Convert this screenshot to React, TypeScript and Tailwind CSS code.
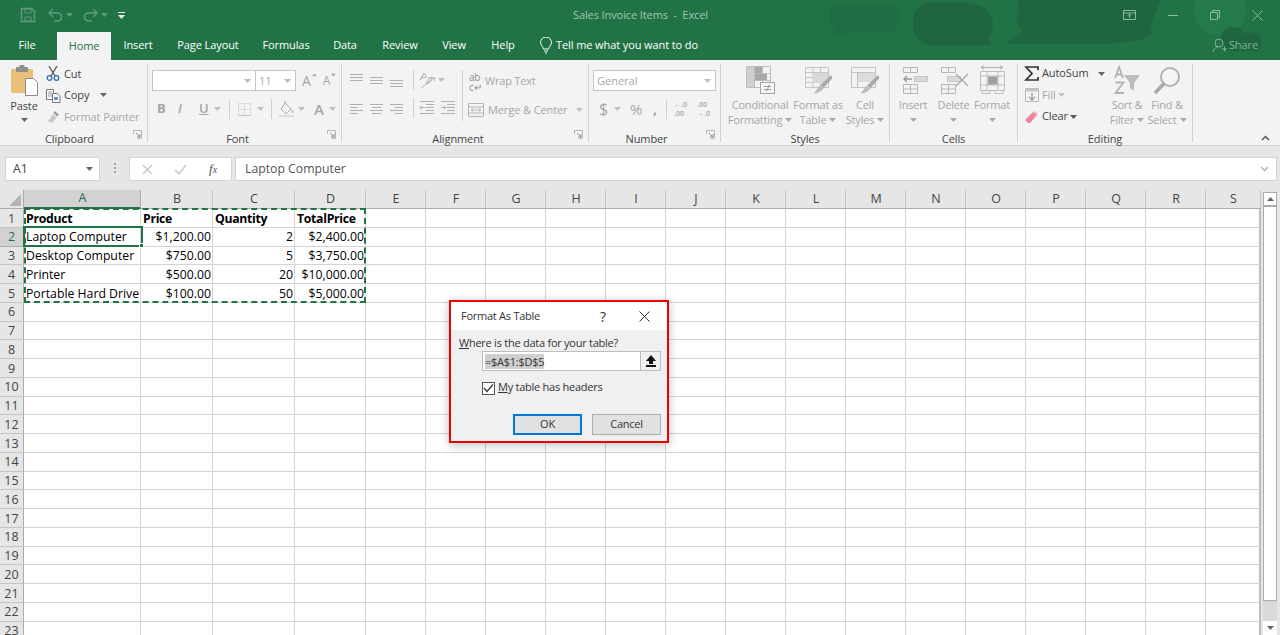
import { ReactNode } from "react";

const FONT = "font-['Open_Sans','Noto_Sans',sans-serif]";

const COLUMNS = ["A", "B", "C", "D", "E", "F", "G", "H", "I", "J", "K", "L", "M", "N", "O", "P", "Q", "R", "S"];
const ROWS = Array.from({ length: 23 }, (_, i) => i + 1);

// cell contents, keyed "<col><row>"
const CELLS: Record<string, { text: string; bold?: boolean; right?: boolean }> = {
  A1: { text: "Product", bold: true },
  B1: { text: "Price", bold: true },
  C1: { text: "Quantity", bold: true },
  D1: { text: "TotalPrice", bold: true },
  A2: { text: "Laptop Computer" },
  B2: { text: "$1,200.00", right: true },
  C2: { text: "2", right: true },
  D2: { text: "$2,400.00", right: true },
  A3: { text: "Desktop Computer" },
  B3: { text: "$750.00", right: true },
  C3: { text: "5", right: true },
  D3: { text: "$3,750.00", right: true },
  A4: { text: "Printer" },
  B4: { text: "$500.00", right: true },
  C4: { text: "20", right: true },
  D4: { text: "$10,000.00", right: true },
  A5: { text: "Portable Hard Drive" },
  B5: { text: "$100.00", right: true },
  C5: { text: "50", right: true },
  D5: { text: "$5,000.00", right: true },
};

function Caret({ color = "#a8a8a8", className = "" }: { color?: string; className?: string }) {
  return (
    <svg width="7" height="4" viewBox="0 0 7 4" className={`shrink-0 ${className}`}>
      <path d="M0 0h7L3.500 4z" fill={color} />
    </svg>
  );
}

function Launcher() {
  return (
    <svg width="9" height="9" viewBox="0 0 9 9" className="absolute right-[5px] bottom-[3px]">
      <path d="M.5 4V.5H8.500V8.500H5" fill="none" stroke="#b5b5b5" />
      <path d="M3 3l4 4M7 4v3H4" fill="none" stroke="#8c8c8c" />
    </svg>
  );
}

function Group({ className, labelClass = "", label, launcher, children }: { className: string; labelClass?: string; label: string; launcher?: boolean; children: ReactNode }) {
  return (
    <div className={`relative flex h-[78px] shrink-0 flex-col border-r border-[#d4d4d4] ${className}`}>
      <div className="h-[67px] shrink-0">{children}</div>
      <div className={`text-center text-[11px] leading-[16px] tracking-[-0.1px] text-[#444] ${labelClass}`}>{label}</div>
      {launcher && <Launcher />}
    </div>
  );
}

function LargeBtn({ className, icon, l1, l2, caret }: { className: string; icon: ReactNode; l1: string; l2?: string; caret?: boolean }) {
  return (
    <div className={`flex shrink-0 flex-col items-center text-[11px] leading-[15px] tracking-[-0.2px] whitespace-nowrap text-[#a6a6a6] ${className}`}>
      <div className="flex h-[33px] items-center justify-center">{icon}</div>
      <div>{l1}</div>
      <div className="flex h-[15px] items-center gap-[3px]">
        {l2}
        {caret && <Caret />}
      </div>
    </div>
  );
}

function Lines({ rows }: { rows: [number, number, number?][] }) {
  return (
    <svg width="14" height="14" viewBox="0 0 14 14">
      {rows.map(([y, len, x = 1], i) => (
        <path key={i} d={`M${x} ${y + 0.5}h${len}`} stroke="#b0b0b0" />
      ))}
    </svg>
  );
}

function PasteIcon() {
  return (
    <svg width="30" height="31" viewBox="0 0 30 31">
      <rect x="2" y="4" width="22" height="24" rx="1" fill="#e8c078" />
      <rect x="7" y="2" width="12" height="5" fill="#8f8f8f" />
      <rect x="10.500" y="0" width="5" height="3" fill="#8f8f8f" />
      <path d="M16.500 13.500h8l4 4v13h-12z" fill="#fff" stroke="#8a8a8a" />
    </svg>
  );
}

function ScissorsIcon() {
  return (
    <svg width="15" height="15" viewBox="0 0 15 15" fill="none">
      <path d="M3 0l6 10M11 0L5 10" stroke="#555" strokeWidth="1.300" />
      <circle cx="3.500" cy="12" r="2.300" stroke="#2f6fb5" strokeWidth="1.300" />
      <circle cx="10.500" cy="12" r="2.300" stroke="#2f6fb5" strokeWidth="1.300" />
    </svg>
  );
}

function CopyIcon() {
  return (
    <svg width="15" height="15" viewBox="0 0 15 15" fill="none">
      <path d="M.5 1.500h7v10h-7z" fill="#fff" stroke="#777" />
      <path d="M2 4h4M2 6h4M2 8h4" stroke="#999" />
      <path d="M6.500 5.500h5l2.500 2.500v6.500h-7.500z" fill="#fff" stroke="#777" />
      <path d="M8 9h4v3H8z" fill="#5b93cc" />
    </svg>
  );
}

function PainterIcon() {
  return (
    <svg width="15" height="14" viewBox="0 0 15 14">
      <path d="M9 1l4 4-2 1.500-3.500-3.500z" fill="#9a9a9a" />
      <path d="M7 4l3.500 3.500L6 13 1 10.500 4 9z" fill="#c8c8c8" />
    </svg>
  );
}

function BigIcon({ children }: { children: ReactNode }) {
  return (
    <svg width="36" height="31" viewBox="0 0 36 31" fill="none">
      {children}
    </svg>
  );
}

function ConditionalIcon() {
  return (
    <BigIcon>
      <path d="M4.500 1.500h24v21h-24zM4.500 8.500h24M4.500 15.500h24M12.500 1.500v21M20.500 1.500v21" stroke="#bdbdbd" />
      <path d="M13 2h7v6h-7zM13 9h12v6H13z" fill="#a9a9a9" />
      <path d="M5 2h7v20H5z" fill="#cfcfcf" />
      <rect x="18.500" y="17.500" width="14" height="11" fill="#f6f6f6" stroke="#a3a3a3" />
      <path d="M22 21.500h7M22 24.500h7M27.500 19.500l-3 7" stroke="#999" />
    </BigIcon>
  );
}

function FormatTableIcon() {
  return (
    <BigIcon>
      <path d="M5.500 2.500h23v20h-23zM5.500 7.500h23M5.500 12.500h23M5.500 17.500h23M13 2.500v20M20.500 2.500v20" stroke="#c6c6c6" />
      <path d="M13 8h15v10H13z" fill="#d8d8d8" />
      <path d="M31 10l1.500 3-9 10-3-3z" fill="#a8a8a8" />
      <path d="M20 20l3.500 3.500c-2 3-6 5-10 5 2-1.500 3.500-5 6.500-8.500z" fill="#bdbdbd" />
    </BigIcon>
  );
}

function CellStylesIcon() {
  return (
    <BigIcon>
      <path d="M4.500 2.500h24v20h-24zM4.500 7.500h24M10.500 7.500v15" stroke="#c2c2c2" />
      <path d="M11 8h17v9H11z" fill="#dcdcdc" />
      <path d="M31 10l1.500 3-9 10-3-3z" fill="#a8a8a8" />
      <path d="M20 20l3.500 3.500c-2 3-6 5-10 5 2-1.500 3.500-5 6.500-8.500z" fill="#bdbdbd" />
    </BigIcon>
  );
}

function InsertIcon() {
  return (
    <BigIcon>
      <path d="M8.500 2.500h14v5h-14zM15.500 2.500v5M8.500 19.500h14v9h-14zM8.500 24h14M15.500 19.500v9M19.500 11.500h13v5h-13zM26 11.500v5" stroke="#b6b6b6" />
      <path d="M19.500 11.500h13v5h-13z" fill="#d9d9d9" />
      <path d="M9 14h8M12 11l-3 3 3 3" stroke="#9a9a9a" strokeWidth="1.400" />
    </BigIcon>
  );
}

function DeleteIcon() {
  return (
    <BigIcon>
      <path d="M5.500 2.500h14v5h-14zM12.500 2.500v5M5.500 19.500h14v9h-14zM5.500 24h14M12.500 19.500v9M11.500 11.500h13v5h-13z" stroke="#b6b6b6" />
      <path d="M11.500 11.500h13v5h-13z" fill="#d9d9d9" />
      <path d="M20 9l12 12M32 9L20 21" stroke="#a8a8a8" strokeWidth="1.400" />
    </BigIcon>
  );
}

function FormatCellsIcon() {
  return (
    <BigIcon>
      <path d="M7 2.500h22M10 .5L7 2.500l3 2M26 .5l3 2-3 2" stroke="#b0b0b0" />
      <path d="M6.500 6.500h24v19h-24zM6.500 11h24M6.500 20h24M13 6.500v19M24 6.500v19" stroke="#bdbdbd" />
      <path d="M14 11.500h9.500v8H14z" fill="#9f9f9f" />
      <path d="M8 25.500v3h8v-3M21 25.500v3h8v-3" stroke="#bdbdbd" />
    </BigIcon>
  );
}

function SortIcon() {
  return (
    <BigIcon>
      <path d="M6 13L10 2l4 11M7.500 9.500h5M6.500 17.500h8L6.500 28h8.500" stroke="#b2b2b2" strokeWidth="1.800" />
      <path d="M15 10h16l-6 8v8l-4-3v-5z" fill="#bcbcbc" />
    </BigIcon>
  );
}

function FindIcon() {
  return (
    <BigIcon>
      <circle cx="21" cy="12" r="9" fill="#f8f3f8" stroke="#b2b2b2" strokeWidth="2" />
      <path d="M14.500 19l-7.500 8" stroke="#a8a8a8" strokeWidth="3.500" strokeLinecap="round" />
    </BigIcon>
  );
}

function Dropdown({ className, text }: { className: string; text?: string }) {
  return (
    <div className={`flex h-[21px] shrink-0 items-center justify-between border border-[#c6c6c6] bg-white pt-[1px] pr-[4px] pl-[3px] text-[11px] text-[#a6a6a6] ${className}`}>
      <span>{text}</span>
      <Caret color="#bcbcbc" />
    </div>
  );
}

function Ribbon() {
  return (
    <div className="relative flex h-[86px] shrink-0 items-start border-b border-[#d2d2d2] bg-[#f3f3f3] pt-[4px]">
      {/* Clipboard */}
      <Group className="w-[148px]" labelClass="pr-[8px]" label="Clipboard" launcher>
        <div className="flex pl-[6px]">
          <div className="flex w-[36px] flex-col items-center pt-[1px] text-[11px] leading-[15px] tracking-[-0.1px] text-[#444]">
            <PasteIcon />
            <span className="mt-[2px]">Paste</span>
            <Caret color="#666" className="mt-[5px]" />
          </div>
          <div className="-mt-[1px] ml-[4px] flex flex-col text-[11px] leading-[22px] tracking-[-0.1px]">
            <div className="flex h-[21px] items-center gap-[3px] text-[#444]">
              <ScissorsIcon />
              Cut
            </div>
            <div className="flex h-[22px] items-center gap-[3px] text-[#444]">
              <CopyIcon />
              Copy
              <Caret color="#666" className="ml-[8px]" />
            </div>
            <div className="flex h-[21px] items-center gap-[3px] text-[#a6a6a6]">
              <PainterIcon />
              Format Painter
            </div>
          </div>
        </div>
      </Group>

      {/* Font */}
      <Group className="w-[194px]" labelClass="pr-[14px]" label="Font" launcher>
        <div className="flex items-center pt-[6px] pl-[4px]">
          <Dropdown className="w-[104px]" />
          <Dropdown className="-ml-px w-[41px]" text="11" />
          <span className="ml-[6px] flex items-start text-[14px] leading-[20px] text-[#a6a6a6]">
            A
            <Caret color="#a6a6a6" className="mt-[2px] scale-75 rotate-180" />
          </span>
          <span className="ml-[5px] flex items-start text-[12px] leading-[20px] text-[#a6a6a6]">
            A
            <Caret color="#a6a6a6" className="mt-[2px] scale-75" />
          </span>
        </div>
        <div className="mt-[8px] flex h-[20px] items-center text-[13px] text-[#a6a6a6]">
          <span className="ml-[9px] w-[21px] font-bold">B</span>
          <span className="w-[21px] font-semibold italic">I</span>
          <span className="w-[15px] font-semibold underline">U</span>
          <Caret color="#c0c0c0" />
          <div className="mr-[8px] ml-[8px] h-[20px] w-px bg-[#d0d0d0]" />
          <svg width="13" height="13" viewBox="0 0 13 13" fill="none">
            <path d="M.5.500h12v12H.5zM6.500.5v12M.5 6.500h12" stroke="#c4c4c4" strokeDasharray="1 1" />
            <path d="M.5 12.500h12" stroke="#c4c4c4" />
          </svg>
          <Caret color="#c0c0c0" className="ml-[6px]" />
          <div className="mx-[7px] h-[20px] w-px bg-[#d0d0d0]" />
          <svg width="16" height="16" viewBox="0 0 16 16">
            <path d="M6 2l6 6-5 5-5-5zM6 2V0" fill="none" stroke="#a8a8a8" />
            <path d="M13 8c1 1.500 2 2.500 1.500 3.500-.5.700-2 .5-2-.5 0-.8.300-2 .5-3z" fill="#bdbdbd" />
            <rect x="0" y="14" width="15" height="2" fill="#dcdcdc" />
          </svg>
          <Caret color="#c0c0c0" className="ml-[3px]" />
          <span className="ml-[9px] text-[15px] leading-[20px] font-semibold">A</span>
          <Caret color="#c0c0c0" className="ml-[5px]" />
        </div>
      </Group>

      {/* Alignment */}
      <Group className="w-[247px]" labelClass="pr-[14px]" label="Alignment" launcher>
        <div className="flex">
          <div className="flex w-[120px] flex-col pl-[7px]">
            <div className="flex items-center pt-[6px]">
              <div className="flex w-[62px] gap-[6px]">
                <Lines rows={[[1, 13], [4, 13], [7, 13]]} />
                <Lines rows={[[4, 13], [7, 13], [10, 13]]} />
                <Lines rows={[[7, 13], [10, 13], [13, 13]]} />
              </div>
              <div className="mr-[4px] ml-[2px] h-[20px] w-px bg-[#d0d0d0]" />
              <svg width="18" height="18" viewBox="0 0 18 18" fill="none">
                <path d="M2 9l4-7 3 4.500M3.500 6.500h4M8 13l4-7c2 1 2 3 .5 4.500C11.500 12 9.500 12 8 13z" stroke="#a8a8a8" />
                <path d="M3 17L16 7M13 6.500h3.500V10" stroke="#b8b8b8" />
              </svg>
              <Caret color="#c0c0c0" className="ml-[2px]" />
            </div>
            <div className="mt-[8px] flex h-[20px] items-center">
              <div className="flex w-[62px] gap-[6px]">
                <Lines rows={[[3, 13], [6, 8], [9, 13], [12, 8]]} />
                <Lines rows={[[3, 13], [6, 9, 3], [9, 13], [12, 9, 3]]} />
                <Lines rows={[[3, 13], [6, 8, 6], [9, 13], [12, 8, 6]]} />
              </div>
              <div className="mr-[5px] ml-[2px] h-[20px] w-px bg-[#d0d0d0]" />
              <svg width="16" height="14" viewBox="0 0 16 14" fill="none">
                <path d="M7 3.500h8M7 6.500h8M7 9.500h8M1 12.500h14M1 .5h14M6 6.500H1M3 4.500l-2 2 2 2" stroke="#b0b0b0" />
              </svg>
              <svg width="16" height="14" viewBox="0 0 16 14" fill="none" className="ml-[5px]">
                <path d="M7 3.500h8M7 6.500h8M7 9.500h8M1 12.500h14M1 .5h14M1 6.500h5M4 4.500l2 2-2 2" stroke="#b0b0b0" />
              </svg>
            </div>
          </div>
          <div className="mt-[6px] h-[51px] w-px bg-[#d0d0d0]" />
          <div className="flex flex-col pt-[1px] pl-[5px]">
            <div className="box-content flex h-[21px] items-center gap-[4px] pt-[6px] pl-[1px] text-[11px] tracking-[-0.2px] whitespace-nowrap text-[#a6a6a6]">
              <span className="w-[12px] shrink-0 text-[10px] leading-[10px] text-[#909090]">
                ab
                <br />c↵
              </span>
              Wrap Text
            </div>
            <div className="mt-[8px] flex h-[20px] items-center">
              <svg width="16" height="14" viewBox="0 0 16 14" fill="none">
                <path d="M.5.500h15v13H.5zM.5 4h15M.5 10h15M3 7h10M5 5.500L3 7l2 1.500M11 5.500L13 7l-2 1.500" stroke="#b4b4b4" />
              </svg>
              <span className="ml-[4px] text-[11px] tracking-[-0.1px] whitespace-nowrap text-[#a6a6a6]">Merge &amp; Center</span>
              <Caret color="#c0c0c0" className="ml-[8px]" />
            </div>
          </div>
        </div>
      </Group>

      {/* Number */}
      <Group className="w-[132px]" labelClass="pr-[16px]" label="Number" launcher>
        <div className="pt-[6px] pl-[4px]">
          <Dropdown className="w-[123px]" text="General" />
        </div>
        <div className="mt-[8px] flex h-[20px] items-center pl-[10px] text-[#a6a6a6]">
          <span className="w-[15px] text-[16px] leading-[20px]">$</span>
          <Caret color="#c0c0c0" />
          <span className="ml-[9px] w-[23px] text-[15px] leading-[20px]">%</span>
          <span className="w-[13px] text-[14px] leading-[16px] font-bold">,</span>
          <div className="mr-[7px] h-[20px] w-px bg-[#d0d0d0]" />
          <span className="w-[23px] text-[7px] leading-[9px] font-semibold whitespace-nowrap">
            ←.0
            <br />
            .00
          </span>
          <span className="text-[7px] leading-[9px] font-semibold whitespace-nowrap">
            .00
            <br />
            →.0
          </span>
        </div>
      </Group>

      {/* Styles */}
      <Group className="w-[169px]" label="Styles">
        <div className="flex pl-[5px]">
          <LargeBtn className="w-[68px]" icon={<ConditionalIcon />} l1="Conditional" l2="Formatting" caret />
          <LargeBtn className="w-[48px]" icon={<FormatTableIcon />} l1="Format as" l2="Table" caret />
          <LargeBtn className="w-[46px]" icon={<CellStylesIcon />} l1="Cell" l2="Styles" caret />
        </div>
      </Group>

      {/* Cells */}
      <Group className="w-[128px]" label="Cells">
        <div className="flex">
          <LargeBtn className="w-[46px]" icon={<InsertIcon />} l1="Insert" caret />
          <LargeBtn className="w-[35px]" icon={<DeleteIcon />} l1="Delete" caret />
          <LargeBtn className="w-[42px]" icon={<FormatCellsIcon />} l1="Format" caret />
        </div>
      </Group>

      {/* Editing */}
      <Group className="w-[175px]" label="Editing">
        <div className="flex">
          <div className="-mt-[1px] flex w-[89px] flex-col pl-[6px] text-[11px] tracking-[-0.1px]">
            <div className="flex h-[21px] items-center text-[#444]">
              <svg width="15" height="15" viewBox="0 0 15 15" fill="none" className="mr-[3px]">
                <path d="M14 4V1H2l6 6.500L2 14h12v-3" stroke="#333" strokeWidth="1.700" />
              </svg>
              AutoSum
              <Caret color="#666" className="ml-[9px]" />
            </div>
            <div className="flex h-[22px] items-center text-[#a6a6a6]">
              <svg width="18" height="16" viewBox="0 0 18 16" fill="none">
                <path d="M1.500 1.500h13v13h-13z" stroke="#b8b8b8" />
                <path d="M1.500 1.500h13v3h-13z" fill="#c4c4c4" />
                <path d="M8 6v7M5 10l3 3 3-3" stroke="#9c9c9c" strokeWidth="1.300" />
              </svg>
              Fill
              <Caret color="#c0c0c0" className="ml-[2px]" />
            </div>
            <div className="flex h-[21px] items-center text-[#444]">
              <svg width="18" height="14" viewBox="0 0 18 14">
                <path d="M1 10l8-8 4 3-7 8H4z" fill="#e8889a" />
                <path d="M9 2l2-1 3 3-1 1z" fill="#f3b3be" />
              </svg>
              Clear
              <Caret color="#555" className="ml-[2px]" />
            </div>
          </div>
          <LargeBtn className="w-[40px]" icon={<SortIcon />} l1="Sort &" l2="Filter" caret />
          <LargeBtn className="w-[40px]" icon={<FindIcon />} l1="Find &" l2="Select" caret />
        </div>
      </Group>

      {/* collapse ribbon */}
      <svg width="9" height="6" viewBox="0 0 9 6" fill="none" className="absolute right-[10px] bottom-[4px]">
        <path d="M1 5l3.500-3.500L8 5" stroke="#555" strokeWidth="1.500" />
      </svg>
    </div>
  );
}

function Header() {
  const tabs: [string, string][] = [
    ["Insert", "w-[54px]"],
    ["Page Layout", "w-[86px]"],
    ["Formulas", "w-[70px]"],
    ["Data", "w-[48px]"],
    ["Review", "w-[62px]"],
    ["View", "w-[46px]"],
    ["Help", "w-[52px]"],
  ];
  return (
    <div className="relative h-[60px] shrink-0 overflow-hidden bg-[#217346] text-[11px] tracking-[-0.1px] text-white">
      {/* the faint pattern on the right of the title bar */}
      <svg width="1280" height="60" viewBox="0 0 1280 60" className="absolute top-0 left-0">
        <circle cx="1220" cy="10" r="26" fill="#247a4b" />
        <path d="M830 8c4-4 8-5 14-5h42c8 0 14 8 14 14 0 8-6 16-16 16h-38l-16 4 6-6c-6-5-8-16-6-23z" fill="#1f6d43" />
        <path d="M927 3h40c16 0 26 9 26 21 0 6-2 10-4 14l2 7h-62c-10-4-16-8-16-21 0-13 6-21 14-21z" fill="#1f6540" />
        <path d="M1018 0h142l-10 28c10 12-25 16-60 16l-85 0c10-6 13-10 17-12l-6-10 2-10z" fill="#1f6540" />
        <path d="M1221 38c1-14 21-14 23-4 8-4 18 0 18 8 0 8-8 9-14 9h-14c-9-1-13-6-13-13z" fill="#1f6540" />
      </svg>
      <div className="relative flex h-[30px] items-center">
        <svg width="18" height="18" viewBox="0 0 18 18" fill="none" className="ml-[19px]">
          <path d="M2.500 2.500h10l3 3v10h-13z" stroke="#5e9a7a" strokeWidth="1.500" />
          <path d="M6 3h6v4H6zM6 11h6v4H6z" stroke="#5e9a7a" />
        </svg>
        <svg width="15" height="14" viewBox="0 0 15 14" fill="none" className="ml-[11px]">
          <path d="M5 1L1 5l4 4M1 5h8c6 0 6 8 0 8H6" stroke="#5e9a7a" strokeWidth="1.500" />
        </svg>
        <Caret color="#5e9a7a" className="ml-[3px]" />
        <svg width="15" height="14" viewBox="0 0 15 14" fill="none" className="ml-[10px]">
          <path d="M10 1l4 4-4 4M14 5H6c-6 0-6 8 0 8h3" stroke="#5e9a7a" strokeWidth="1.500" />
        </svg>
        <Caret color="#5e9a7a" className="ml-[3px]" />
        <svg width="7" height="7" viewBox="0 0 7 7" className="ml-[10px]">
          <path d="M0 3h7L3.500 7z" fill="#e8f0ec" />
          <path d="M0 .5h7" stroke="#e8f0ec" />
        </svg>
        <div className="absolute top-0 left-[430px] flex h-[30px] w-[420px] items-center whitespace-pre text-[#9dc7b0]">
          <span className="ml-[143px]">Sales Invoice Items  -  Excel</span>
        </div>
        <div className="ml-auto flex items-center text-[#8fbba3]">
          <svg width="13" height="10" viewBox="0 0 13 10" fill="none">
            <path d="M.5.500h12v9H.5zM.5 3h12M6.500 8V4M5 5.500l1.500-1.500L8 5.500" stroke="#8fbba3" />
          </svg>
          <div className="ml-[32px] h-px w-[10px] bg-[#8fbba3]" />
          <svg width="10" height="10" viewBox="0 0 10 10" fill="none" className="ml-[32px]">
            <path d="M.5 2.500h7v7h-7zM2.500 2V.5h7v7H8" stroke="#8fbba3" />
          </svg>
          <svg width="11" height="11" viewBox="0 0 11 11" fill="none" className="mr-[17px] ml-[32px]">
            <path d="M.5.500l10 10M10.500.5L.5 10.500" stroke="#8fbba3" />
          </svg>
        </div>
      </div>
      <div className="relative flex h-[30px] items-center">
        <div className="w-[57px] pr-[3px] text-center">File</div>
        <div className="flex h-[28px] w-[54px] items-center justify-center self-end bg-[#f3f3f3] text-[#217346]">Home</div>
        {tabs.map(([name, w]) => (
          <div key={name} className={`text-center ${w}`}>
            {name}
          </div>
        ))}
        <svg width="14" height="17" viewBox="0 0 14 17" fill="none" className="ml-[10px]">
          <path d="M4.500 12c0-2-3-3.500-3-6.500a5.500 5.500 0 0 1 11 0c0 3-3 4.500-3 6.500zM5 14h4M6 16h2" stroke="#fff" />
        </svg>
        <span className="ml-[3px]">Tell me what you want to do</span>
        <div className="mr-[22px] ml-auto flex items-center gap-[2px] text-[#7fb296]">
          <svg width="15" height="15" viewBox="0 0 15 15" fill="none">
            <circle cx="7" cy="5" r="4" stroke="#7fb296" />
            <path d="M1 14c.5-3 2.500-5 5-5M10 11h5M12.500 8.500v5" stroke="#7fb296" />
          </svg>
          Share
        </div>
      </div>
    </div>
  );
}

function FormulaBar() {
  return (
    <div className="flex h-[44px] shrink-0 items-start bg-[#e6e6e6] pt-[11px] text-[12.25px] text-[#555]">
      <div className="ml-[5px] flex h-[24px] w-[95px] items-center justify-between border border-[#d4d4d4] bg-white pr-[6px] pl-[7px] text-[#444]">
        A1
        <Caret color="#666" />
      </div>
      <div className="flex w-[29px] flex-col items-center gap-[2px] pt-[6px]">
        <div className="h-[2px] w-[2px] bg-[#a0a0a0]" />
        <div className="h-[2px] w-[2px] bg-[#a0a0a0]" />
        <div className="h-[2px] w-[2px] bg-[#a0a0a0]" />
      </div>
      <div className="flex h-[24px] w-[103px] items-center border border-[#d4d4d4] bg-white">
        <svg width="11" height="11" viewBox="0 0 11 11" fill="none" className="ml-[12px]">
          <path d="M1 1l9 9M10 1l-9 9" stroke="#c4c4c4" strokeWidth="1.300" />
        </svg>
        <svg width="13" height="11" viewBox="0 0 13 11" fill="none" className="ml-[21px]">
          <path d="M1 6l4 4 7-9" stroke="#c4c4c4" strokeWidth="1.300" />
        </svg>
        <span className="ml-[22px] font-['Liberation_Serif',serif] text-[13px] text-[#555] italic">
          f<span className="text-[10px]">x</span>
        </span>
      </div>
      <div className="ml-[3px] flex h-[24px] w-[1042px] items-center justify-between border border-[#d4d4d4] bg-white pr-[7px] pl-[9px]">
        Laptop Computer
        <svg width="9" height="6" viewBox="0 0 9 6" fill="none">
          <path d="M1 1l3.500 3.500L8 1" stroke="#b0b0b0" strokeWidth="1.300" />
        </svg>
      </div>
    </div>
  );
}

function Sheet() {
  return (
    <div className="relative flex min-h-0 flex-1 overflow-hidden bg-[#e6e6e6]">
      <div className="grid h-fit w-[1261px] shrink-0 auto-rows-[18.75px] grid-cols-[24px_117px_72px_82px_71px_repeat(14,60px)_55px] grid-rows-[19px] bg-white">
        {/* column headers */}
        <div className="relative border-r border-b border-[#ababab] bg-[#e6e6e6]">
          <svg width="12" height="12" viewBox="0 0 12 12" className="absolute right-[2px] bottom-[2px]">
            <path d="M12 0v12H0z" fill="#b5b5b5" />
          </svg>
        </div>
        {COLUMNS.map((c) => (
          <div
            key={c}
            className={`flex items-center justify-center border-r pl-[1px] text-[12.5px] ${
              c === "A"
                ? "border-r-[#ababab] border-b-2 border-b-[#217346] bg-[#d2d2d2] text-[#217346]"
                : "border-r-[#c4c4c4] border-b border-b-[#ababab] bg-[#e6e6e6] text-[#444]"
            }`}
          >
            {c}
          </div>
        ))}
        {/* rows */}
        {ROWS.map((r) => (
          <div key={r} className="contents">
            <div
              className={`flex items-center justify-center border-r border-b pt-[2px] text-[12.5px] ${
                r === 2
                  ? "border-r-[#217346] border-b-[#ababab] bg-[#d2d2d2] text-[#217346]"
                  : "border-r-[#ababab] border-b-[#c4c4c4] bg-[#e6e6e6] text-[#444]"
              }`}
            >
              {r}
            </div>
            {COLUMNS.map((c) => {
              const cell = CELLS[`${c}${r}`];
              return (
                <div
                  key={c}
                  className={`flex items-center overflow-visible border-b pt-[2px] pr-[1px] pl-[2px] text-[12.25px] whitespace-nowrap text-black ${
                    c === "S" ? "border-r-2 border-r-[#bdbdbd] border-b-[#d4d4d4]" : "border-r border-[#d4d4d4]"
                  } ${cell?.right ? "justify-end" : ""} ${cell?.bold ? "font-bold tracking-[-0.3px]" : ""}`}
                >
                  {cell?.text}
                </div>
              );
            })}
          </div>
        ))}
      </div>

      {/* copy marquee and active cell */}
      <div className="absolute top-[18px] left-[24px] h-[95px] w-[342px] border-2 border-dashed border-[#217346]" />
      <div className="absolute top-[36px] left-[23px] h-[21px] w-[120px] border-2 border-[#217346]">
        <div className="absolute -right-[3px] -bottom-[3px] h-[5px] w-[5px] border border-white bg-[#217346]" />
      </div>

      {/* scrollbar */}
      <div className="mt-[2px] ml-[2px] flex w-[14px] shrink-0 flex-col bg-[#dadada]">
        <div className="flex h-[14px] shrink-0 items-center justify-center border border-[#ababab] bg-white">
          <Caret color="#666" className="rotate-180" />
        </div>
        <div className="h-[395px] shrink-0 border border-[#ababab] bg-white" />
        <div className="mt-auto flex h-[14px] shrink-0 items-center justify-center bg-white">
          <Caret color="#666" />
        </div>
      </div>

      <Dialog />
    </div>
  );
}

function Dialog() {
  return (
    <div className="absolute top-[110px] left-[449px] h-[143px] w-[220px] border-2 border-[#ed0000] text-[11px] tracking-[-0.25px] text-[#333] shadow-[0_2px_10px_rgba(0,0,0,0.25)]">
      <div className="flex h-[28px] items-center bg-white pl-[10px] text-[#333]">
        Format As Table
        <span className="ml-[60px] text-[14px]">?</span>
        <svg width="11" height="11" viewBox="0 0 11 11" fill="none" className="ml-[33px]">
          <path d="M.5.500l10 10M10.500.5L.5 10.500" stroke="#333" />
        </svg>
      </div>
      <div className="h-[111px] bg-[#f0f0f0] pt-[5px] pl-[8px]">
        <div className="leading-[16px]">
          <span className="underline">W</span>here is the data for your table?
        </div>
        <div className="ml-[23px] flex h-[20px] w-[179px] items-center border border-[#bdbdbd] bg-white pl-[2px]">
          <span className="bg-[#cfcfcf] leading-[15px]">=$A$1:$D$5</span>
          <div className="ml-auto flex h-[18px] w-[20px] items-center justify-center border-l border-[#bdbdbd] bg-[#f0f0f0]">
            <svg width="10" height="12" viewBox="0 0 10 12">
              <path d="M5 0l5 6H7v3H3V6H0zM0 10h10v2H0z" fill="#111" />
            </svg>
          </div>
        </div>
        <div className="mt-[8px] ml-[23px] flex items-center">
          <div className="flex h-[13px] w-[13px] items-center justify-center border border-[#555] bg-white">
            <svg width="11" height="9" viewBox="0 0 11 9" fill="none">
              <path d="M1 4l3 3.500L10 .5" stroke="#333" strokeWidth="1.200" />
            </svg>
          </div>
          <span className="mb-[2px] ml-[3px]">
            <span className="underline">M</span>y table has headers
          </span>
        </div>
        <div className="mt-[16px] ml-[54px] flex gap-[10px]">
          <div className="flex h-[21px] w-[69px] items-center justify-center border-2 border-[#0078d7] bg-[#e1e1e1]">OK</div>
          <div className="flex h-[21px] w-[69px] items-center justify-center border border-[#adadad] bg-[#e1e1e1]">Cancel</div>
        </div>
      </div>
    </div>
  );
}

export default function App() {
  return (
    <div className={`flex h-[635px] w-[1280px] flex-col overflow-hidden ${FONT}`}>
      <Header />
      <Ribbon />
      <FormulaBar />
      <Sheet />
    </div>
  );
}
